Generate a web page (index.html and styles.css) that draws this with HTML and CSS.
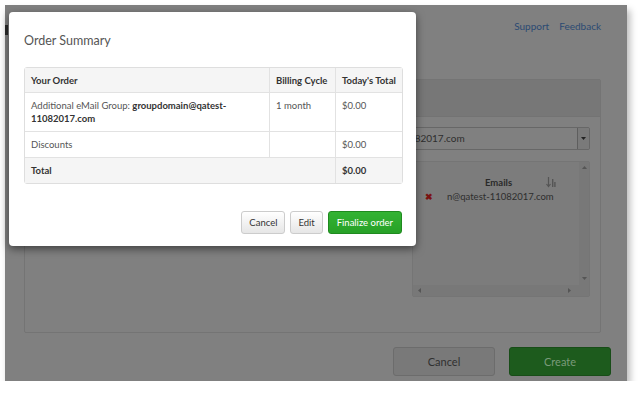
FILE: index.html
```html
<!DOCTYPE html>
<html lang="en">
<head>
  <meta charset="UTF-8" />
  <title>Order Summary</title>
  <link rel="stylesheet" href="styles.css">
</head>
<body>

  <div class="frame">
    <div class="topbar">
      <span class="logo-edge"></span>
      <nav class="links">
        <a href="#">Support</a>
        <a href="#">Feedback</a>
      </nav>
    </div>

    <section class="panel">
      <div class="panel-head"></div>
      <div class="panel-body">
        <div class="select">
          <span class="select-text">groupdomain@qatest-11082017.com</span>
          <span class="select-btn">
            <svg width="5" height="3" viewBox="0 0 5 3"><path d="M0 0h5L2.5 3z" fill="#222"/></svg>
          </span>
        </div>
        <div class="list">
          <div class="list-main">
            <div class="list-head">
              <span class="list-title">Emails</span>
              <svg class="sort" width="10" height="11" viewBox="0 0 10 11">
                <path d="M2.5 0v9M0.5 7l2 2.5 2-2.5" stroke="#555" stroke-width="1.2" fill="none"/>
                <rect x="6" y="2" width="1.4" height="8" fill="#555"/>
                <rect x="8.2" y="5" width="1.4" height="5" fill="#555"/>
              </svg>
            </div>
            <div class="list-row">
              <span class="remove">&#10006;</span>
              <span>n@qatest-11082017.com</span>
            </div>
          </div>
          <div class="vscroll">
            <svg width="5" height="3" viewBox="0 0 5 3"><path d="M0 3h5L2.5 0z" fill="#555"/></svg>
            <svg width="5" height="3" viewBox="0 0 5 3"><path d="M0 0h5L2.5 3z" fill="#555"/></svg>
          </div>
          <div class="hscroll">
            <svg width="3" height="5" viewBox="0 0 3 5"><path d="M3 0v5L0 2.5z" fill="#555"/></svg>
            <svg width="3" height="5" viewBox="0 0 3 5"><path d="M0 0v5L3 2.5z" fill="#555"/></svg>
          </div>
        </div>
      </div>
    </section>

    <div class="page-actions">
      <button class="btn-cancel">Cancel</button>
      <button class="btn-create">Create</button>
    </div>

    <div class="modal">
      <h2 class="modal-title">Order Summary</h2>
      <table class="order">
        <thead>
          <tr>
            <th class="c1">Your Order</th>
            <th class="c2">Billing Cycle</th>
            <th class="c3">Today's Total</th>
          </tr>
        </thead>
        <tbody>
          <tr>
            <td>Additional eMail Group: <b>groupdomain@qatest-11082017.com</b></td>
            <td>1 month</td>
            <td>$0.00</td>
          </tr>
          <tr>
            <td>Discounts</td>
            <td></td>
            <td>$0.00</td>
          </tr>
          <tr class="total">
            <td colspan="2">Total</td>
            <td>$0.00</td>
          </tr>
        </tbody>
      </table>
      <div class="modal-actions">
        <button class="btn">Cancel</button>
        <button class="btn">Edit</button>
        <button class="btn btn-green">Finalize order</button>
      </div>
    </div>
  </div>

</body>
</html>
```

FILE: styles.css
```css
* {
  box-sizing: border-box;
  margin: 0;
  padding: 0;
}

body {
  background: #fff;
  font-family: Lato, 'Open Sans', sans-serif;
  color: #555;
}

.frame {
  position: relative;
  margin: 5px 0 0 5px;
  width: 622px;
  height: 376px;
  background: #808080;
  box-shadow: 3px 5px 7px rgba(0,0,0,0.28);
}

/* page behind the overlay */
.topbar {
  display: flex;
  justify-content: space-between;
  padding: 14px 26px 0 0;
  height: 28px;
}

.logo-edge {
  width: 3px;
  height: 10px;
  margin-top: 6px;
  background: #2a2a2a;
}

.links {
  display: flex;
  gap: 10px;
  font-size: 10px;
  line-height: 14px;
}

.links a {
  color: #2b4a73;
  text-decoration: none;
}

.panel {
  margin: 46px 26px 0 19px;
  height: 254px;
  border: 1px solid #747474;
  border-radius: 2px;
}

.panel-head {
  height: 37px;
  background: #777;
  border-bottom: 1px solid #737373;
}

.panel-body {
  display: flex;
  flex-direction: column;
  align-items: flex-end;
  padding: 10px 10px 0 0;
  gap: 11px;
}

.select {
  display: flex;
  width: 294px;
  height: 23px;
  border: 1px solid #676767;
  border-radius: 2px;
  font-size: 10px;
  color: #2e2e2e;
}

.select-text {
  flex: 1;
  padding-left: 3px;
  line-height: 21px;
}

.select-btn {
  width: 12px;
  display: flex;
  align-items: center;
  justify-content: center;
  border-left: 1px solid #5e5e5e;
  background: #7a7a7a;
  border-radius: 0 2px 2px 0;
}

.list {
  display: grid;
  grid-template-columns: 1fr 10px;
  grid-template-rows: 1fr 11px;
  width: 178px;
  height: 136px;
  border: 1px solid #757575;
  border-radius: 2px;
  background: #7c7c7c;
}

.list-main {
  padding: 14px 0 0 12px;
  font-size: 9.5px;
  color: #2e2e2e;
}

.list-head {
  display: flex;
  align-items: center;
  height: 12px;
}

.list-title {
  font-weight: bold;
  margin-left: 60px;
  color: #2a2a2a;
}

.sort {
  margin-left: 34px;
}

.list-row {
  display: flex;
  align-items: center;
  gap: 14px;
  margin-top: 2px;
  line-height: 13px;
}

.remove {
  color: #7a1212;
  font-size: 9px;
  font-weight: bold;
}

.vscroll {
  display: flex;
  flex-direction: column;
  justify-content: space-between;
  align-items: center;
  padding: 4px 0 5px;
  background: #787878;
}

.hscroll {
  grid-column: 1 / 3;
  display: flex;
  justify-content: space-between;
  align-items: center;
  padding: 0 18px 0 5px;
  background: #787878;
}

.page-actions {
  display: flex;
  justify-content: flex-end;
  gap: 14px;
  padding: 14px 16px 0 0;
}

.page-actions button {
  width: 102px;
  height: 29px;
  border-radius: 3px;
  font-family: Lato, sans-serif;
  font-size: 11px;
}

.btn-cancel {
  background: #797979;
  border: 1px solid #6c6c6c;
  color: #303030;
}

.btn-create {
  background: #1d5b1d;
  border: 1px solid #184d18;
  color: #7a9a7a;
}

/* dialog over the page */
.modal {
  position: absolute;
  left: 4px;
  top: 7px;
  width: 407px;
  height: 234px;
  padding: 19px 14px 0 15px;
  background: #fff;
  border-radius: 4px;
  box-shadow: 0 3px 9px rgba(0,0,0,0.5);
}

.modal-title {
  font-size: 12.5px;
  font-weight: normal;
  line-height: 20px;
  color: #555;
}

.order {
  margin-top: 16px;
  width: 379px;
  table-layout: fixed;
  border-collapse: separate;
  border-spacing: 0;
  border: 1px solid #dedede;
  border-radius: 3px;
  font-size: 9.5px;
  line-height: 13px;
  color: #555;
}

.order th,
.order td {
  padding: 6px 5px 6px 6px;
  text-align: left;
  vertical-align: top;
  border-bottom: 1px solid #e2e2e2;
  border-left: 1px solid #e2e2e2;
}

.order th {
  padding-bottom: 5px;
}

.order th:first-child,
.order td:first-child {
  border-left: none;
}

.order tr:last-child td {
  border-bottom: none;
}

.order th {
  color: #333;
  background: #f5f5f5;
  font-weight: bold;
  white-space: nowrap;
}

.order b {
  color: #333;
}

.c1 { width: 244px; }
.c2 { width: 66px; }

.order .total td {
  background: #f5f5f5;
  font-weight: bold;
  color: #333;
}

.modal-actions {
  display: flex;
  justify-content: flex-end;
  gap: 5px;
  margin-top: 27px;
}

.btn {
  height: 23px;
  padding: 0 7px;
  font-family: Lato, sans-serif;
  font-size: 9.5px;
  color: #333;
  background: linear-gradient(#fff, #e6e6e6);
  border: 1px solid #ccc;
  border-radius: 3px;
}

.btn-green {
  padding: 0 8px;
  color: #fff;
  background: linear-gradient(#33b333, #27a127);
  border-color: #1f8a1f;
}
```
